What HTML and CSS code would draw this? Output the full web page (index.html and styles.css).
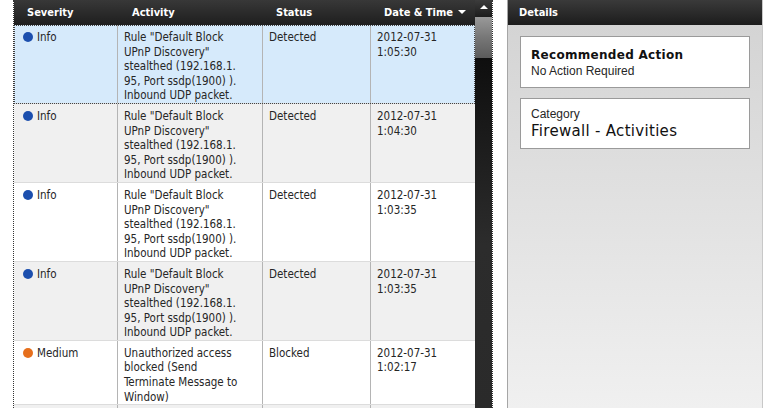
FILE: index.html
```html
<!DOCTYPE html>
<html lang="en">
<head>
  <meta charset="UTF-8">
  <title>Security History</title>
  <link rel="stylesheet" href="styles.css">
</head>
<body>
  <div class="log">
    <div class="log-table">
      <div class="log-head">
        <div class="head-cell">Severity</div>
        <div class="head-cell">Activity</div>
        <div class="head-cell">Status</div>
        <div class="head-cell">Date &amp; Time <span class="sort"></span></div>
      </div>

      <div class="row selected">
        <div class="cell sev"><span class="dot info"></span>Info</div>
        <div class="cell">Rule "Default Block<br>UPnP Discovery"<br>stealthed (192.168.1.<br>95, Port ssdp(1900) ).<br>Inbound UDP packet.</div>
        <div class="cell">Detected</div>
        <div class="cell">2012-07-31<br>1:05:30</div>
      </div>
      <div class="row alt">
        <div class="cell sev"><span class="dot info"></span>Info</div>
        <div class="cell">Rule "Default Block<br>UPnP Discovery"<br>stealthed (192.168.1.<br>95, Port ssdp(1900) ).<br>Inbound UDP packet.</div>
        <div class="cell">Detected</div>
        <div class="cell">2012-07-31<br>1:04:30</div>
      </div>
      <div class="row">
        <div class="cell sev"><span class="dot info"></span>Info</div>
        <div class="cell">Rule "Default Block<br>UPnP Discovery"<br>stealthed (192.168.1.<br>95, Port ssdp(1900) ).<br>Inbound UDP packet.</div>
        <div class="cell">Detected</div>
        <div class="cell">2012-07-31<br>1:03:35</div>
      </div>
      <div class="row alt">
        <div class="cell sev"><span class="dot info"></span>Info</div>
        <div class="cell">Rule "Default Block<br>UPnP Discovery"<br>stealthed (192.168.1.<br>95, Port ssdp(1900) ).<br>Inbound UDP packet.</div>
        <div class="cell">Detected</div>
        <div class="cell">2012-07-31<br>1:03:35</div>
      </div>
      <div class="row">
        <div class="cell sev"><span class="dot medium"></span>Medium</div>
        <div class="cell">Unauthorized access<br>blocked (Send<br>Terminate Message to<br>Window)</div>
        <div class="cell">Blocked</div>
        <div class="cell">2012-07-31<br>1:02:17</div>
      </div>
      <div class="row alt filler">
        <div class="cell"></div>
        <div class="cell"></div>
        <div class="cell"></div>
        <div class="cell"></div>
      </div>
    </div>

    <div class="scrollbar">
      <div class="scroll-up"></div>
      <div class="scroll-thumb"></div>
    </div>
  </div>

  <div class="details">
    <div class="details-head">Details</div>
    <div class="details-body">
      <div class="card">
        <div class="card-title">Recommended Action</div>
        <div class="card-text">No Action Required</div>
      </div>
      <div class="card">
        <div class="card-label">Category</div>
        <div class="card-value">Firewall - Activities</div>
      </div>
    </div>
  </div>
</body>
</html>
```

FILE: styles.css
```css
body {
  margin: 0;
  height: 408px;
  overflow: hidden;
  background: white;
  display: flex;
  align-items: stretch;
  font-family: "DejaVu Sans Condensed", "DejaVu Sans", sans-serif;
  font-size: 11.5px;
  color: #262626;
}

.log {
  margin-left: 13px;
  display: flex;
  border-left: 1px dotted #333;
  border-right: 1px dotted #333;
}

.log-table {
  width: 461px;
  overflow: hidden;
}

.log-head,
.row {
  display: grid;
  grid-template-columns: 104px 145px 108px 104px;
}

.log-head {
  height: 25px;
  background: linear-gradient(#383838, #1e1e1e);
  color: white;
  font-size: 11px;
  font-weight: bold;
  align-items: center;
}

.head-cell {
  padding-left: 13px;
}

.head-cell:nth-child(2) {
  padding-left: 14px;
}

.sort {
  display: inline-block;
  margin-left: 2px;
  border-left: 4px solid transparent;
  border-right: 4px solid transparent;
  border-top: 4px solid white;
  vertical-align: 2px;
}

.row {
  background: white;
  border-bottom: 1px solid #dcdcdc;
  line-height: 14.6px;
}

.row.alt {
  background: #f0f0f0;
}

.row.selected {
  background: #d6eafb;
  outline: 1px dotted #444;
  outline-offset: -1px;
}

.row.filler {
  height: 60px;
}

.cell {
  padding: 5px 6px 0;
  border-right: 1px solid #b4b4b4;
  white-space: nowrap;
}

.cell:last-child {
  border-right: none;
}

.cell.sev {
  padding-left: 9px;
}

.dot {
  display: inline-block;
  width: 10px;
  height: 10px;
  border-radius: 50%;
  margin-right: 4px;
  vertical-align: -1px;
}

.dot.info {
  background: #1c4fae;
}

.dot.medium {
  background: #e66f1c;
}

.scrollbar {
  width: 17px;
  background: linear-gradient(#050505, #2c2c2c 60%, #2a2a2a);
  display: flex;
  flex-direction: column;
}

.scroll-up {
  height: 17px;
  background: linear-gradient(#3c3c3c, #1c1c1c);
  display: flex;
  justify-content: center;
  align-items: center;
}

.scroll-up::after {
  content: "";
  border-left: 4px solid transparent;
  border-right: 4px solid transparent;
  border-bottom: 4px solid white;
  margin-top: -4px;
}

.scroll-thumb {
  height: 41px;
  background: linear-gradient(#999, #777 50%, #5c5c5c);
}

.details {
  margin-left: 14px;
  width: 254px;
  border-left: 1px solid #a6a6a6;
  border-right: 1px solid #c8c8c8;
  display: flex;
  flex-direction: column;
}

.details-head {
  height: 25px;
  line-height: 25px;
  padding-left: 11px;
  background: linear-gradient(#3a3a3a, #1c1c1c);
  color: white;
  font-size: 11px;
  font-weight: bold;
}

.details-body {
  flex: 1;
  padding: 11px 12px;
  background: linear-gradient(#d4d4d4, #f0f0f0);
  display: flex;
  flex-direction: column;
  gap: 10px;
}

.card {
  background: white;
  border: 1px solid #9a9a9a;
  padding: 10px 10px 8px;
}

.card-title {
  font-family: "DejaVu Sans", sans-serif;
  font-weight: bold;
  font-size: 12px;
  letter-spacing: 0.3px;
  line-height: 17px;
  color: #111;
}

.card-text,
.card-label {
  font-family: "Liberation Sans", sans-serif;
  font-size: 12px;
  line-height: 15px;
}

.card:nth-child(2) {
  padding-top: 8px;
}

.card-value {
  font-family: "DejaVu Sans", sans-serif;
  font-size: 15px;
  letter-spacing: 0.3px;
  line-height: 18px;
  color: #111;
}
```
